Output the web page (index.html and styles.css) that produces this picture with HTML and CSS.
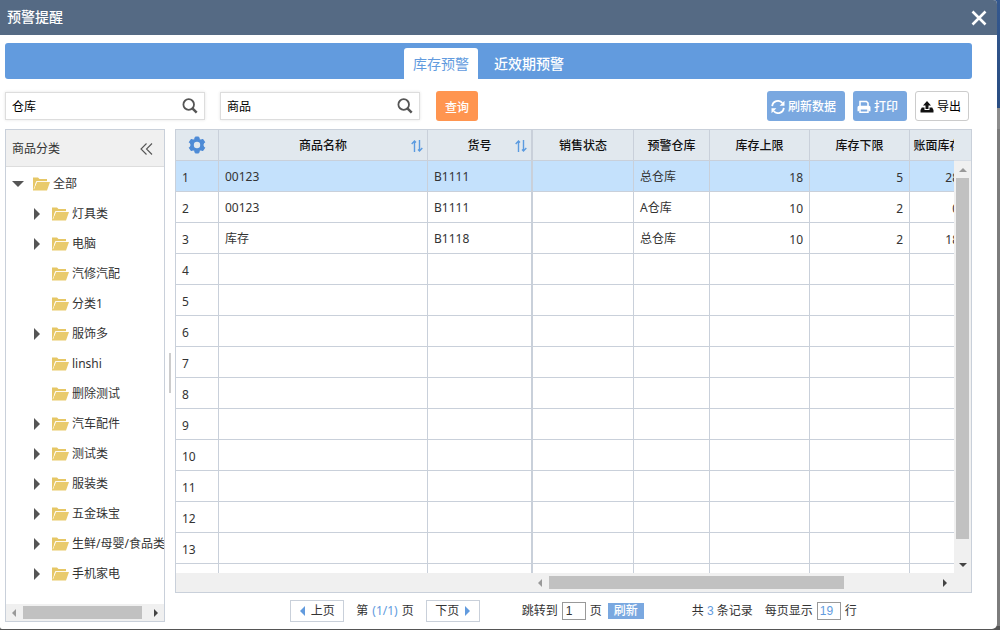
FILE: index.html
```html
<!DOCTYPE html>
<html lang="zh-CN">
<head>
<meta charset="utf-8">
<title>预警提醒</title>
<link rel="stylesheet" href="styles.css">
</head>
<body>
<svg class="defs" aria-hidden="true">
  <symbol id="folder" viewBox="0 0 17 14"><path d="M0 .5h5l1.500 1.500H14v2.500H3.500L0 13.500z" fill="#e6c766"/><path d="M3.800 5H17l-3 8.500H0V12h1.200z" fill="#e9cb6d"/><path d="M14 4.500H3.500L2.200 8.500" stroke="#fff" stroke-width=".8" fill="none"/></symbol>
  <symbol id="search" viewBox="0 0 16 16"><circle cx="6.7" cy="6.5" r="5.3" fill="none" stroke="#555" stroke-width="1.8"/><path d="M10.4 10.4l4.300 4.300" stroke="#555" stroke-width="2.500"/></symbol>
  <symbol id="sort" viewBox="0 0 12 12"><path d="M3.500 12V1M.7 4l2.800-3 1.500 1.500M8.500 0v11M11.300 8l-2.800 3L7 9.500" stroke="#5b9be0" stroke-width="1.400" fill="none"/></symbol>
</svg>
<div class="dialog">
  <header class="title-bar">
    <h1 class="title">预警提醒</h1>
    <button class="close" aria-label="关闭"><svg width="16" height="16" viewBox="0 0 16 16"><path d="M1.5 1.5l13 13M14.5 1.5l-13 13" stroke="#fff" stroke-width="2.6"/></svg></button>
  </header>
  <div class="content">
    <nav class="tabs">
      <button class="tab tab-active">库存预警</button>
      <button class="tab">近效期预警</button>
    </nav>
    <div class="toolbar">
      <div class="search-box"><input class="search-input" aria-label="仓库" value="仓库"><button class="icon-button" aria-label="查找仓库"><svg width="16" height="16"><use href="#search"/></svg></button></div>
      <div class="search-box"><input class="search-input" aria-label="商品" value="商品"><button class="icon-button" aria-label="查找商品"><svg width="16" height="16"><use href="#search"/></svg></button></div>
      <button class="btn btn-query">查询</button>
      <div class="actions">
        <button class="btn btn-blue"><svg width="14" height="14" viewBox="0 0 14 14"><path d="M1.2 6.2A5.8 5.8 0 0 1 11.4 3M12.8 7.8A5.8 5.8 0 0 1 2.6 11" stroke="#fff" stroke-width="1.8" fill="none"/><path d="M13.5 0.7v5H8.6zM.5 13.3v-5h4.9z" fill="#fff"/></svg><span>刷新数据</span></button>
        <button class="btn btn-blue"><svg width="14" height="14" viewBox="0 0 14 14"><path d="M3 6V1.5h6.5L11 3v3" stroke="#fff" stroke-width="1.6" fill="none"/><path d="M2 5.8h10q1.5 0 1.5 1.5v3.9h-2V9.6h-9v1.6h-2V7.3q0-1.500 1.500-1.500z" fill="#fff"/><path d="M3 9v3.200h8V9" fill="none" stroke="#fff" stroke-width="1.500"/></svg><span>打印</span></button>
        <button class="btn btn-white"><svg width="14" height="14" viewBox="0 0 14 14"><path d="M7 1l4 4.500H8.500V9h-3V5.500H3z" fill="#111"/><path d="M1.800 7.500h2.700V10h5V7.500h2.700L13.500 10v2.500H.5V10z" fill="#111"/></svg><span>导出</span></button>
      </div>
    </div>
    <div class="workspace">
      <aside class="tree-panel">
        <div class="tree-head"><span>商品分类</span><button class="icon-button" aria-label="收起"><svg width="13" height="12" viewBox="0 0 13 12"><path d="M6.500 .5L1 6l5.500 5.500M12 .5L6.500 6l5.500 5.500" stroke="#555" stroke-width="1.100" fill="none"/></svg></button></div>
        <ul class="tree">
          <li class="node root"><button class="toggle open" aria-label="收起全部"></button><svg width="17" height="14"><use href="#folder"/></svg><span>全部</span></li>
          <li class="node"><button class="toggle" aria-label="展开"></button><svg width="17" height="14"><use href="#folder"/></svg><span>灯具类</span></li>
          <li class="node"><button class="toggle" aria-label="展开"></button><svg width="17" height="14"><use href="#folder"/></svg><span>电脑</span></li>
          <li class="node leaf"><svg width="17" height="14"><use href="#folder"/></svg><span>汽修汽配</span></li>
          <li class="node leaf"><svg width="17" height="14"><use href="#folder"/></svg><span>分类1</span></li>
          <li class="node"><button class="toggle" aria-label="展开"></button><svg width="17" height="14"><use href="#folder"/></svg><span>服饰多</span></li>
          <li class="node leaf"><svg width="17" height="14"><use href="#folder"/></svg><span>linshi</span></li>
          <li class="node leaf"><svg width="17" height="14"><use href="#folder"/></svg><span>删除测试</span></li>
          <li class="node"><button class="toggle" aria-label="展开"></button><svg width="17" height="14"><use href="#folder"/></svg><span>汽车配件</span></li>
          <li class="node"><button class="toggle" aria-label="展开"></button><svg width="17" height="14"><use href="#folder"/></svg><span>测试类</span></li>
          <li class="node"><button class="toggle" aria-label="展开"></button><svg width="17" height="14"><use href="#folder"/></svg><span>服装类</span></li>
          <li class="node"><button class="toggle" aria-label="展开"></button><svg width="17" height="14"><use href="#folder"/></svg><span>五金珠宝</span></li>
          <li class="node"><button class="toggle" aria-label="展开"></button><svg width="17" height="14"><use href="#folder"/></svg><span>生鲜/母婴/食品类</span></li>
          <li class="node"><button class="toggle" aria-label="展开"></button><svg width="17" height="14"><use href="#folder"/></svg><span>手机家电</span></li>
        </ul>
        <div class="scroll-x"><i class="arrow left dim"></i><div class="track"><div class="thumb tree-thumb"></div></div><i class="arrow right"></i></div>
      </aside>
      <div class="splitter"><div class="grip"></div></div>
      <main class="main">
        <div class="grid">
          <div class="viewport">
            <table class="table">
              <colgroup><col class="c-no"><col class="c-name"><col class="c-code"><col class="c-state"><col class="c-store"><col class="c-limit"><col class="c-limit"><col class="c-book"></colgroup>
              <thead>
                <tr>
                  <th class="gear-cell"><button class="icon-button gear" aria-label="设置"><svg width="18" height="18" viewBox="0 0 18 18"><path d="M7.300 1h3.400l.6 2.200 1.500.9 2.200-.7 1.700 2.900-1.600 1.700v2l1.600 1.700-1.700 2.900-2.200-.7-1.500.9-.6 2.200H7.300l-.6-2.200-1.500-.9-2.200.7-1.700-2.900L2.900 10V8L1.300 6.300 3 3.400l2.200.7 1.500-.9z" fill="#4e8bd6" stroke="#4e8bd6" stroke-linejoin="round"/><circle cx="9" cy="9" r="3.200" fill="#e1e8ee"/></svg></button></th>
                  <th><div class="sortable"><span>商品名称</span><svg width="12" height="12"><use href="#sort"/></svg></div></th>
                  <th><div class="sortable"><span>货号</span><svg width="12" height="12"><use href="#sort"/></svg></div></th>
                  <th>销售状态</th><th>预警仓库</th><th>库存上限</th><th>库存下限</th><th>账面库存</th>
                </tr>
              </thead>
              <tbody>
                <tr class="selected"><td class="no">1</td><td>00123</td><td>B1111</td><td></td><td>总仓库</td><td class="num">18</td><td class="num">5</td><td class="num">28</td></tr>
                <tr><td class="no">2</td><td>00123</td><td>B1111</td><td></td><td>A仓库</td><td class="num">10</td><td class="num">2</td><td class="num">0</td></tr>
                <tr><td class="no">3</td><td>库存</td><td>B1118</td><td></td><td>总仓库</td><td class="num">10</td><td class="num">2</td><td class="num">18</td></tr>
                <tr><td class="no">4</td><td></td><td></td><td></td><td></td><td></td><td></td><td></td></tr>
                <tr><td class="no">5</td><td></td><td></td><td></td><td></td><td></td><td></td><td></td></tr>
                <tr><td class="no">6</td><td></td><td></td><td></td><td></td><td></td><td></td><td></td></tr>
                <tr><td class="no">7</td><td></td><td></td><td></td><td></td><td></td><td></td><td></td></tr>
                <tr><td class="no">8</td><td></td><td></td><td></td><td></td><td></td><td></td><td></td></tr>
                <tr><td class="no">9</td><td></td><td></td><td></td><td></td><td></td><td></td><td></td></tr>
                <tr><td class="no">10</td><td></td><td></td><td></td><td></td><td></td><td></td><td></td></tr>
                <tr><td class="no">11</td><td></td><td></td><td></td><td></td><td></td><td></td><td></td></tr>
                <tr><td class="no">12</td><td></td><td></td><td></td><td></td><td></td><td></td><td></td></tr>
                <tr><td class="no">13</td><td></td><td></td><td></td><td></td><td></td><td></td><td></td></tr>
                <tr><td class="no"></td><td></td><td></td><td></td><td></td><td></td><td></td><td></td></tr>
              </tbody>
            </table>
          </div>
          <div class="side"><div class="side-head"></div><div class="scroll-y"><i class="arrow up dim"></i><div class="track-y"><div class="thumb-y"></div></div><i class="arrow down"></i></div></div>
          <div class="scroll-x grid-scroll"><i class="arrow left dim"></i><div class="track"><div class="thumb grid-thumb"></div></div><i class="arrow right"></i></div>
        </div>
        <footer class="pager">
          <button class="page-btn"><i class="arrow left blue"></i><span>上页</span></button>
          <span class="page-info">第 <b class="accent">(1/1)</b> 页</span>
          <button class="page-btn"><span>下页</span><i class="arrow right blue"></i></button>
          <div class="jump"><label for="page">跳转到</label><input class="page-input" id="page" value="1"><span>页</span><button class="refresh">刷新</button></div>
          <span class="total">共 <b class="accent arial">3</b> 条记录</span>
          <div class="per-page"><label for="size">每页显示</label><input class="page-input size-input" id="size" value="19"><span>行</span></div>
        </footer>
      </main>
    </div>
  </div>
</div>
</body>
</html>
```
FILE: styles.css
```css
* { box-sizing: border-box; }
body {
  margin: 0;
  height: 100vh;
  display: flex;
  padding: 0 3px 1px 0;
  overflow: hidden;
  background: linear-gradient(#34588f 0, #294d82 108px, #8c8c8c 108px 129px, #7c7c7c 129px, #7c7c7c calc(100% - 4px), #555 calc(100% - 4px));
  font: 12px/18px "Noto Sans", "Noto Sans CJK SC", sans-serif;
  color: #333;
}
button, input { font: inherit; color: inherit; margin: 0; padding: 0; border: 0; background: none; }
svg { flex: none; display: block; }
.defs { position: absolute; width: 0; height: 0; }
.dialog { flex: 1; min-width: 0; display: flex; flex-direction: column; background: #fff; border-radius: 0 4px 5px 2px; overflow: hidden; }
.title-bar { display: flex; justify-content: space-between; align-items: center; height: 35px; padding: 0 10px 0 7px; background: #556a84; color: #fff; }
.title { margin: 0; padding-bottom: 2px; font-size: 14px; line-height: 20px; font-weight: 500; }
.content { flex: 1; min-height: 0; display: flex; flex-direction: column; padding: 8px 25px 7px 5px; }
.tabs { display: flex; justify-content: center; align-items: flex-end; gap: 7px; height: 36px; background: #629bde; border-radius: 3px; }
.tab { height: 31px; padding: 0 9px; font-size: 14px; font-weight: 500; color: #fff; border-radius: 3px 3px 0 0; }
.tab-active { background: #fff; color: #629bde; font-weight: 400; }
.toolbar { display: flex; align-items: center; padding: 12px 3px 8px 0; }
.search-box { display: flex; align-items: center; width: 200px; height: 28px; margin-right: 15px; padding: 0 6px; border: 1px solid #ddd; box-shadow: 0 0 3px #e4e4e4; color: #000; }
.search-input { flex: 1; min-width: 0; padding-top: 2px; outline: 0; }
.icon-button { display: block; }
.btn { display: flex; align-items: center; justify-content: center; gap: 3px; height: 30px; padding-top: 3px; border-radius: 3px; color: #fff; font-weight: 500; }
.btn-query { width: 42px; background: #ff9550; margin-left: 1px; }
.actions { display: flex; gap: 8px; margin-left: auto; }
.actions .btn { padding: 2px 9px 0 4px; }
.actions .btn-blue { background: #7aa8e0; }
.actions .btn-white { padding-right: 7px; border: 1px solid #ccc; color: #000; font-weight: 400; }
.workspace { flex: 1; min-height: 0; display: flex; }
.tree-panel { width: 160px; display: flex; flex-direction: column; border: 1px solid #c9d0da; }
.tree-head { display: flex; justify-content: space-between; align-items: center; height: 37px; padding: 1px 11px 0 6px; background: #f0f0f0; border-bottom: 1px solid #ddd; }
.tree { flex: 1; min-height: 0; margin: 0; padding: 2px 0 0; list-style: none; overflow: hidden; }
.node { display: flex; align-items: center; gap: 3px; height: 30px; padding-left: 28px; white-space: nowrap; }
.toggle { flex: none; width: 15px; height: 12px; }
.toggle::before { content: ""; display: block; width: 0; border-left: 6px solid #555; border-top: 6px solid transparent; border-bottom: 6px solid transparent; }
.root { padding-left: 6px; }
.toggle.open { width: 18px; height: 6px; }
.toggle.open::before { border-left: 6px solid transparent; border-right: 6px solid transparent; border-top: 6px solid #555; border-bottom: 0; }
.leaf { padding-left: 46px; }
.splitter { width: 10px; display: flex; align-items: center; justify-content: center; padding-bottom: 5px; }
.grip { width: 2px; height: 40px; background: #ccc; }
.main { flex: 1; min-width: 0; display: flex; flex-direction: column; }
.grid { flex: 1; min-height: 0; display: grid; grid-template-columns: minmax(0, 1fr) 17px; grid-template-rows: minmax(0, 1fr) 19px; border: 1px solid #c9d0da; }
.viewport { overflow: hidden; }
.table { table-layout: fixed; width: 790px; border-collapse: separate; border-spacing: 0; }
.c-no { width: 43px; }
.c-name { width: 209px; }
.c-code { width: 105px; }
.c-state { width: 101px; }
.c-store { width: 76px; }
.c-limit { width: 100px; }
.c-book { width: 56px; }
.table th, .table td { height: 31px; padding: 2px 6px 0; border: solid #c9d0da; border-width: 0 1px 1px 0; white-space: nowrap; }
.table th { padding: 2px 0 0; background: #e1e8ee; color: #111; font-weight: 500; text-align: center; }
.table th:nth-child(3), .table td:nth-child(3) { border-right-width: 2px; }
.table .gear-cell { padding: 0; }
.sortable { display: grid; grid-template-columns: 1fr auto; align-items: center; padding: 0 4px 0 16px; }
.gear { margin: 0 auto; }
.table .no, .table .num { padding-top: 4px; }
.table .num { text-align: right; }
.selected { background: #c4e1fc; }
.side { display: flex; flex-direction: column; background: #f0f0f0; }
.side-head { height: 31px; background: #e1e8ee; border-bottom: 1px solid #d8dee6; }
.scroll-y { flex: 1; display: flex; flex-direction: column; align-items: center; padding: 7px 0 6px; }
.track-y { flex: 1; width: 13px; padding: 6px 0 24px; }
.thumb-y { height: 100%; background: #c1c1c1; }
.scroll-x { display: flex; align-items: center; height: 17px; padding: 0 6px; background: #f0f0f0; }
.track { flex: 1; padding: 0 12px 0 7px; }
.thumb { height: 13px; background: #c1c1c1; }
.grid-scroll { grid-column: 1 / -1; height: 19px; padding: 0 24px 0 362px; }
.grid-scroll .track { padding: 0 99px 0 7px; }
.arrow { flex: none; width: 0; height: 0; border: 4px solid transparent; }
.left { border-right-color: #444; border-left-width: 0; }
.right { border-left-color: #444; border-right-width: 0; }
.up { border-bottom-color: #444; border-top-width: 0; }
.down { border-top-color: #444; border-bottom-width: 0; }
.left.dim { border-right-color: #999; }
.up.dim { border-bottom-color: #999; }
.blue { border-top-width: 5px; border-bottom-width: 5px; }
.left.blue { border-right-color: #629bde; border-right-width: 5px; }
.right.blue { border-left-color: #629bde; border-left-width: 5px; }
.pager { display: flex; align-items: center; justify-content: center; height: 29px; padding-top: 6px; white-space: nowrap; }
.page-btn { display: flex; align-items: center; justify-content: center; gap: 6px; width: 54px; height: 22px; border: 1px solid #c9d0da; }
.page-info { margin: 0 12px; }
.accent { color: #629bde; font-weight: 400; }
.page-info .accent { margin: 0 1px; }
.arial { font-family: "Liberation Sans", sans-serif; }
.jump { display: flex; align-items: center; gap: 4px; margin-left: 42px; }
.page-input { width: 24px; height: 18px; padding-left: 3px; border: 1px solid #999; font-family: "Liberation Sans", sans-serif; }
.refresh { width: 36px; height: 16px; line-height: 16px; margin-left: 2px; background: #7aa8e0; color: #fff; font-weight: 500; }
.total { margin: 0 12px 0 48px; }
.per-page { display: flex; align-items: center; gap: 4px; }
.size-input { padding-left: 2px; color: #629bde; }
```
